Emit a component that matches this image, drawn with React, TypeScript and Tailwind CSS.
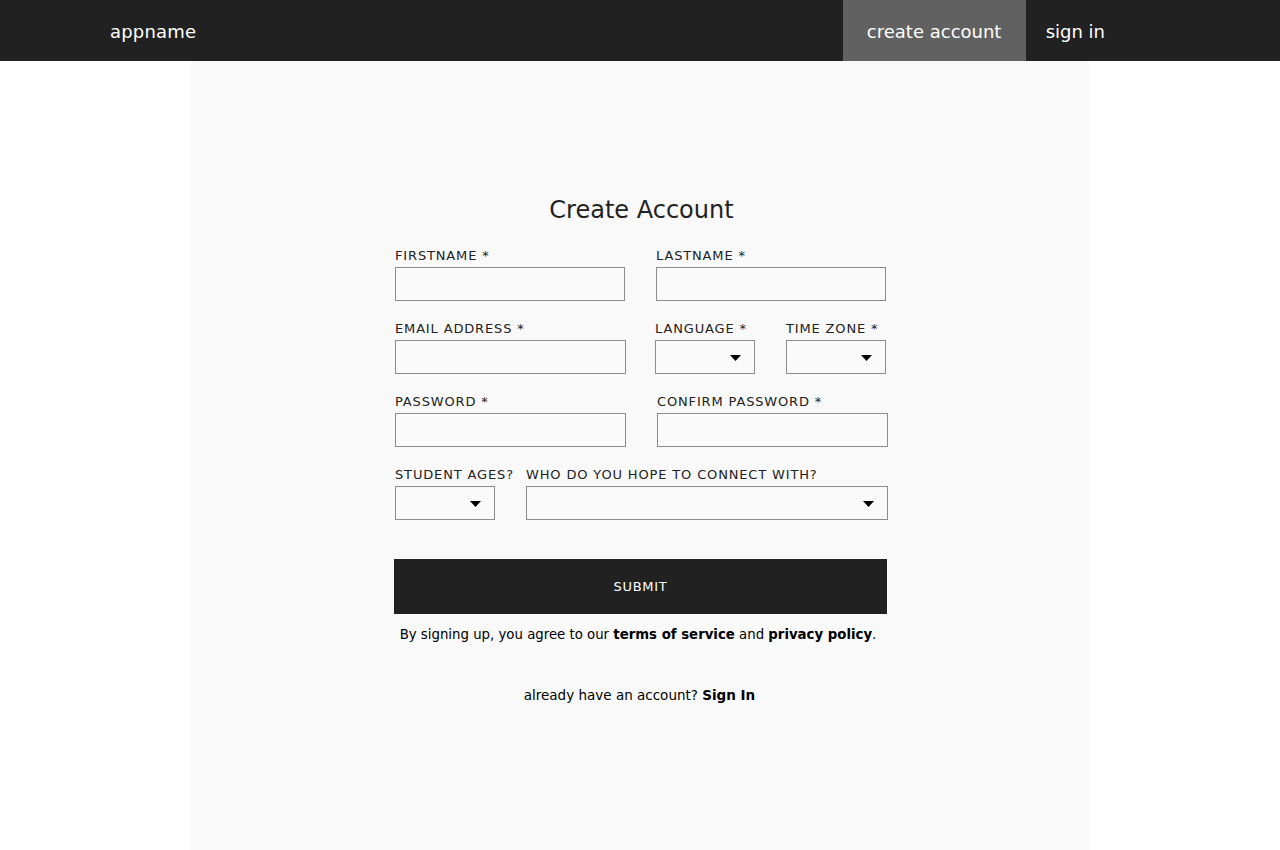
import React from "react";

function Caret() {
  return (
    <svg width="11" height="6" viewBox="0 0 11 6" className="absolute right-[13px] top-[14px]">
      <path d="M0 0h11L5.5 6z" fill="#000" />
    </svg>
  );
}

function Field({
  label,
  width,
  select,
}: {
  label: string;
  width: string;
  select?: boolean;
}) {
  return (
    <div className={`flex flex-col ${width}`}>
      <label className="pt-[1px] text-[13px] leading-[16px] tracking-[0.85px] uppercase text-[#222] whitespace-nowrap">
        {label}
      </label>
      <div className="relative mt-[3px] h-[34px] border border-[#8c8c8c] bg-[#fafafa]">
        {select && <Caret />}
      </div>
    </div>
  );
}

export default function App() {
  return (
    <div className="min-h-screen w-full bg-white font-['DejaVu_Sans',sans-serif] text-[#222]">
      {/* nav */}
      <div className="h-[61px] bg-[#212121] flex items-stretch">
        <div className="pl-[110px] pt-[2px] flex items-center text-white text-[18px] tracking-[0.2px]">
          appname
        </div>
        <div className="ml-auto flex items-stretch pr-[175px]">
          <div className="w-[183px] pt-[2px] bg-[#616161] flex items-center justify-center text-white text-[18px]">
            create account
          </div>
          <div className="pl-[20px] pt-[2px] flex items-center text-white text-[18px]">sign in</div>
        </div>
      </div>

      {/* panel */}
      <div className="mx-auto w-[898px] h-[789px] bg-[#f9f9f9] flex flex-col items-center">
        <div className="w-[493px] ml-[3px] mt-[134px] flex flex-col">
          <h1 className="text-center text-[24px] leading-[30px] text-[#222]">Create Account</h1>

          <div className="mt-[22px] flex flex-col gap-[19px]">
            <div className="flex gap-[31px]">
              <Field label="Firstname *" width="w-[230px]" />
              <Field label="Lastname *" width="w-[230px]" />
            </div>
            <div className="flex gap-[29px]">
              <Field label="Email Address *" width="w-[231px]" />
              <div className="flex gap-[31px]">
                <Field label="Language *" width="w-[100px]" select />
                <Field label="Time Zone *" width="w-[100px]" select />
              </div>
            </div>
            <div className="flex gap-[31px]">
              <Field label="Password *" width="w-[231px]" />
              <Field label="Confirm Password *" width="w-[231px]" />
            </div>
            <div className="flex gap-[31px]">
              <Field label="Student Ages?" width="w-[100px]" select />
              <Field label="Who do you hope to connect with?" width="w-[362px]" select />
            </div>
          </div>

          <button className="mt-[39px] -ml-[1px] w-[493px] h-[55px] bg-[#212121] text-white text-[13px] tracking-[0.7px]">
            SUBMIT
          </button>

          <p className="mt-[11px] pr-[7px] text-center text-[13.3px] text-black whitespace-nowrap">
            By signing up, you agree to our <b>terms of service</b> and <b>privacy policy</b>.
          </p>

          <p className="mt-[40px] pr-[4px] text-center text-[13.5px] text-black">
            already have an account? <b>Sign In</b>
          </p>
        </div>
      </div>
    </div>
  );
}
